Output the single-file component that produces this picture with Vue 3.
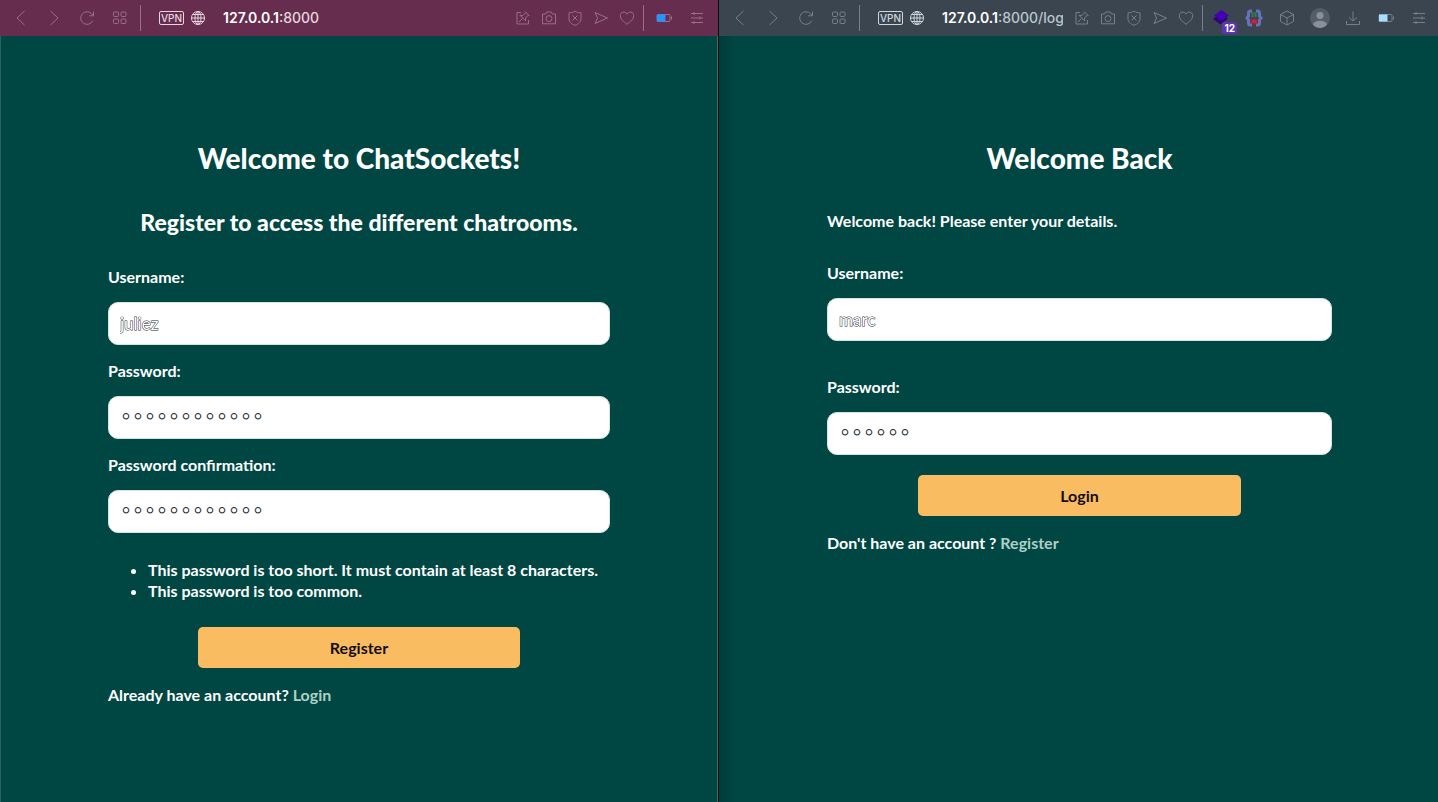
<script setup>
import { ref } from 'vue'

const navIcons = [
  { id: 'back', label: 'Back' },
  { id: 'forward', label: 'Forward' },
  { id: 'reload', label: 'Reload' },
  { id: 'tiles', label: 'Speed dial' }
]
const pageIcons = [
  { id: 'edit', label: 'Pin page' },
  { id: 'camera', label: 'Snapshot' },
  { id: 'shield', label: 'Ad blocker' },
  { id: 'send', label: 'Send to flow' },
  { id: 'heart', label: 'Bookmark' }
]
const windows = [
  {
    id: 'register',
    host: '127.0.0.1',
    path: ':8000',
    tools: [
      { id: 'battery', label: 'Battery saver' },
      { id: 'menu', label: 'Easy setup' }
    ]
  },
  {
    id: 'login',
    host: '127.0.0.1',
    path: ':8000/log',
    tools: [
      { id: 'layers', label: 'Extension', badge: '12' },
      { id: 'braces', label: 'JSON viewer' },
      { id: 'cube', label: 'Extensions' },
      { id: 'profile', label: 'Profile' },
      { id: 'download', label: 'Downloads' },
      { id: 'battery', label: 'Battery saver' },
      { id: 'menu', label: 'Easy setup' }
    ]
  }
]
const errors = [
  'This password is too short. It must contain at least 8 characters.',
  'This password is too common.'
]
const newUser = ref('juliez')
const newPass = ref('abcdefghijkl')
const newPass2 = ref('abcdefghijkl')
const user = ref('marc')
const pass = ref('abcdef')
</script>

<template>
  <svg class="defs" aria-hidden="true">
    <symbol id="back" viewBox="0 0 18 18"><path d="M12.500 2 5 9l7.500 7" /></symbol>
    <symbol id="forward" viewBox="0 0 18 18"><path d="m5.500 2 7.500 7-7.500 7" /></symbol>
    <symbol id="reload" viewBox="0 0 18 18"><path d="M14.800 11.500A6.300 6.300 0 1 1 13.800 5l1.500 1.600M15.500 2.500v4.300h-4.300" /></symbol>
    <symbol id="tiles" viewBox="0 0 18 18"><rect x="2.500" y="3" width="5" height="4.500" rx="1" /><rect x="10" y="3" width="5" height="4.500" rx="1" /><rect x="2.500" y="10" width="5" height="4.500" rx="1" /><rect x="10" y="10" width="5" height="4.500" rx="1" /></symbol>
    <symbol id="globe" viewBox="0 0 18 18"><circle cx="9" cy="9" r="6.500" /><ellipse cx="9" cy="9" rx="3" ry="6.500" /><path d="M9 2.500v13M2.500 9h13M3.700 5.500h10.600M3.700 12.500h10.600" /></symbol>
    <symbol id="edit" viewBox="0 0 18 18"><path d="M7 3.500H3v11.500h11.500V11M11 2.500 15.500 7M14.500 6l-3 3 .2 3-5.700-5.700 3 .2 3-3M8.500 9.500 5 13" /></symbol>
    <symbol id="camera" viewBox="0 0 18 18"><path d="M2.500 5h3l1.200-2h4.600l1.200 2h3v9.800h-13z" /><circle cx="9" cy="9.600" r="3" /></symbol>
    <symbol id="shield" viewBox="0 0 18 18"><path d="M9 2c1.800 1.400 3.800 1.800 6 1.800V10c0 2.800-2.400 5-6 6.300C5.400 15 3 12.800 3 10V3.800C5.200 3.800 7.200 3.400 9 2zM6.500 6.500l5 5M11.500 6.500l-5 5" /></symbol>
    <symbol id="send" viewBox="0 0 18 18"><path d="m3 3.500 12.500 5.500L3 14.500 5.500 9z" /></symbol>
    <symbol id="heart" viewBox="0 0 18 18"><path d="M9 15.300C5.500 12.500 2.300 10 2.300 6.700c0-4 5-5 6.700-1.500 1.700-3.500 6.700-2.500 6.700 1.500 0 3.300-3.200 5.800-6.700 8.600z" /></symbol>
    <symbol id="battery" viewBox="0 0 18 18"><rect x="2" y="5.500" width="13" height="7" rx="1" /><path d="M16.500 7.500v3" /><rect class="charge" x="2" y="5.500" width="8.500" height="7" /></symbol>
    <symbol id="menu" viewBox="0 0 18 18"><path d="M3 4.500h12M3 9h12M3 13.500h12M6 3v3M12 7.500v3M6 12v3" /></symbol>
    <symbol id="layers" viewBox="0 0 18 18"><path d="m8.500 4 7.500 5.500-7.500 6L1 10z" fill="#2c0577" stroke="none" /><path d="m9.500 1 7.500 5.500-7.500 5.500L2 6.500z" fill="#4600b4" stroke="none" /></symbol>
    <symbol id="braces" viewBox="0 0 18 18"><path d="M7 2H5.500Q3.500 2 3.500 4v3L2 9l1.500 2v3q0 2 2 2H7M11 2h1.500q2 0 2 2v3L16 9l-1.500 2v3q0 2-2 2H11" fill="none" stroke="#6871bb" stroke-width="3" /><path d="M7.500 3v5M10.500 3v5" stroke="#288056" stroke-width="2" /><path d="m9 9 1 2 2.500-.5-1 2 .5 2.500-3-1-3 1 .5-2.500-1-2 2.500.5z" fill="#e3182d" stroke="none" /></symbol>
    <symbol id="cube" viewBox="0 0 18 18"><path d="m9 2 6.500 3.500v7L9 16l-6.500-3.500v-7zM2.500 5.500 9 9l6.500-3.500M9 9v7" /></symbol>
    <symbol id="profile" viewBox="0 0 20 20"><circle cx="10" cy="10" r="10" fill="#555e67" stroke="none" /><circle cx="10" cy="7.500" r="3.500" fill="#87919b" stroke="none" /><path d="M3 16.500c1-5 13-5 14 0-3 4.500-11 4.500-14 0z" fill="#87919b" stroke="none" /></symbol>
    <symbol id="download" viewBox="0 0 18 18"><path d="M9 2.500V12M5 8.500 9 12l4-3.500M2.500 12v3.500h13V12" /></symbol>
  </svg>

  <main class="desktop">
    <section v-for="w in windows" :key="w.id" class="window" :class="w.id">
      <header class="toolbar">
        <nav class="group nav">
          <button v-for="i in navIcons" :key="i.id" type="button" class="tool" :aria-label="i.label">
            <svg class="icon"><use :href="'#' + i.id" /></svg>
          </button>
        </nav>
        <span class="rule"></span>
        <div class="address">
          <span class="vpn">VPN</span>
          <svg class="icon"><use href="#globe" /></svg>
          <span class="url">{{ w.host }}<span class="path">{{ w.path }}</span></span>
        </div>
        <div class="group page">
          <button v-for="i in pageIcons" :key="i.id" type="button" class="tool small" :aria-label="i.label">
            <svg class="icon"><use :href="'#' + i.id" /></svg>
          </button>
        </div>
        <span class="rule"></span>
        <div class="group tools">
          <button v-for="i in w.tools" :key="i.id" type="button" class="tool" :aria-label="i.label">
            <svg class="icon" :class="i.id"><use :href="'#' + i.id" /></svg>
            <span v-if="i.badge" class="badge">{{ i.badge }}</span>
          </button>
        </div>
      </header>

      <form v-if="w.id === 'register'" class="form" @submit.prevent>
        <h1>Welcome to ChatSockets!</h1>
        <h2>Register to access the different chatrooms.</h2>
        <div class="field">
          <label for="new-user">Username:</label>
          <input id="new-user" v-model="newUser" type="text" />
        </div>
        <div class="field">
          <label for="new-pass">Password:</label>
          <input id="new-pass" v-model="newPass" type="password" />
        </div>
        <div class="field">
          <label for="new-pass2">Password confirmation:</label>
          <input id="new-pass2" v-model="newPass2" type="password" />
        </div>
        <ul>
          <li v-for="e in errors" :key="e">{{ e }}</li>
        </ul>
        <button type="submit" class="submit">Register</button>
        <p class="switch">Already have an account? <a href="#login">Login</a></p>
      </form>

      <form v-else class="form" @submit.prevent>
        <h1>Welcome Back</h1>
        <p class="intro">Welcome back! Please enter your details.</p>
        <div class="field">
          <label for="user">Username:</label>
          <input id="user" v-model="user" type="text" />
        </div>
        <div class="field">
          <label for="pass">Password:</label>
          <input id="pass" v-model="pass" type="password" />
        </div>
        <button type="submit" class="submit">Login</button>
        <p class="switch">Don't have an account ? <a href="#register">Register</a></p>
      </form>
    </section>
  </main>
</template>

<style>
body { background: #004643; }
</style>

<style scoped>
* { box-sizing: border-box; }
.defs { position: absolute; width: 0; height: 0; }
.desktop {
  display: grid;
  grid-template-columns: minmax(0, 1fr) minmax(0, 1fr);
  min-height: 100vh;
  background: #004643;
  color: #fffffe;
  font: 700 16px/21px Lato, sans-serif;
}
.register { border-right: 1px solid #0a0c0d; box-shadow: inset -1px 0 #3f6b69, inset 1px 0 #2a6361; --icon: #9b6d88; --bright: #e6d6df; --path: #e6d6df; --charge: #1e96ff; }
.login { --icon: #75808a; --bright: #cbd9dc; --path: #b9c7cc; --charge: #a5dcff; background: linear-gradient(90deg, #003c3a, #004643 16px); }
.toolbar {
  display: flex;
  align-items: center;
  height: 36px;
  padding: 0 5px 0 4px;
  background: #672d4e;
}
.login .toolbar { padding-right: 3px; background: #3a4550; border-bottom: 1px solid #2d4a50; }
.group { display: flex; flex: none; }
.nav { margin-right: 1px; }
.tool {
  position: relative;
  display: flex;
  align-items: center;
  justify-content: center;
  width: 33px;
  height: 30px;
  padding: 0;
  border: 0;
  background: none;
  color: var(--icon);
}
.small { width: 26px; }
.icon { flex: none; width: 18px; height: 18px; fill: none; stroke: currentColor; stroke-width: 1; }
.icon.profile { width: 20px; height: 20px; }
.charge { fill: var(--charge); stroke: none; }
.rule { flex: none; width: 1px; height: 26px; margin: 0 3px; background: var(--icon); }
.login .page + .rule { margin-right: 1px; }
.badge {
  position: absolute;
  right: 0;
  bottom: -1px;
  padding: 0 2px;
  border-radius: 2px;
  background: #5d35ae;
  color: #fff;
  font: 700 10px/12px Inter, sans-serif;
}
.address {
  display: flex;
  flex: 1;
  align-items: center;
  min-width: 0;
  padding-left: 15px;
  margin-right: 6px;
  color: var(--bright);
}
.vpn {
  flex: none;
  width: 25px;
  margin-right: 5px;
  border: 1px solid;
  border-radius: 2px;
  font: 500 10px/12px Inter, sans-serif;
  text-align: center;
}
.url {
  flex: 1;
  min-width: 0;
  margin-left: 16px;
  overflow: hidden;
  white-space: nowrap;
  color: #fff;
  font: 600 14px/20px Inter, sans-serif;
}
.path { color: var(--path); font-weight: 500; }
.form {
  display: flex;
  flex-direction: column;
  margin: 0 108px;
  padding: 104px 0 40px;
}
.login .form { margin-right: 106px; }
h1, h2 { margin: 0; text-align: center; font-weight: 900; }
h1 { margin-bottom: 32px; font-size: 28px; line-height: 36px; }
h2 { margin-bottom: 31px; font-size: 23px; line-height: 28px; }
.field { display: flex; flex-direction: column; gap: 16px; margin-bottom: 16px; }
label { line-height: 19px; }
input {
  width: 100%;
  height: 43px;
  padding: 0 11px;
  border: 1px solid #d5e4e3;
  border-radius: 10px;
  background: #fff;
  color: #fff;
  font: 400 17px/21px Lato, sans-serif;
  -webkit-text-stroke: 1px #252b33;
  paint-order: stroke fill;
}
input[type='password'] { font: 400 20px/21px "Liberation Mono", monospace; paint-order: normal; }
ul { margin: 10px 0 26px; padding-left: 40px; }
.submit {
  align-self: center;
  width: 64%;
  height: 41px;
  border: 0;
  border-radius: 5px;
  background: #fabc60;
  color: #150d16;
  font: 700 16px/21px Lato, sans-serif;
}
.switch { margin: 16px 0 0; }
.switch a { color: #abd1c6; text-decoration: none; }
.login h1 { margin-bottom: 34px; }
.intro { margin: 0 0 32px; }
.login .field { margin-bottom: 36px; }
.login .field + .field { margin-bottom: 20px; }
</style>
